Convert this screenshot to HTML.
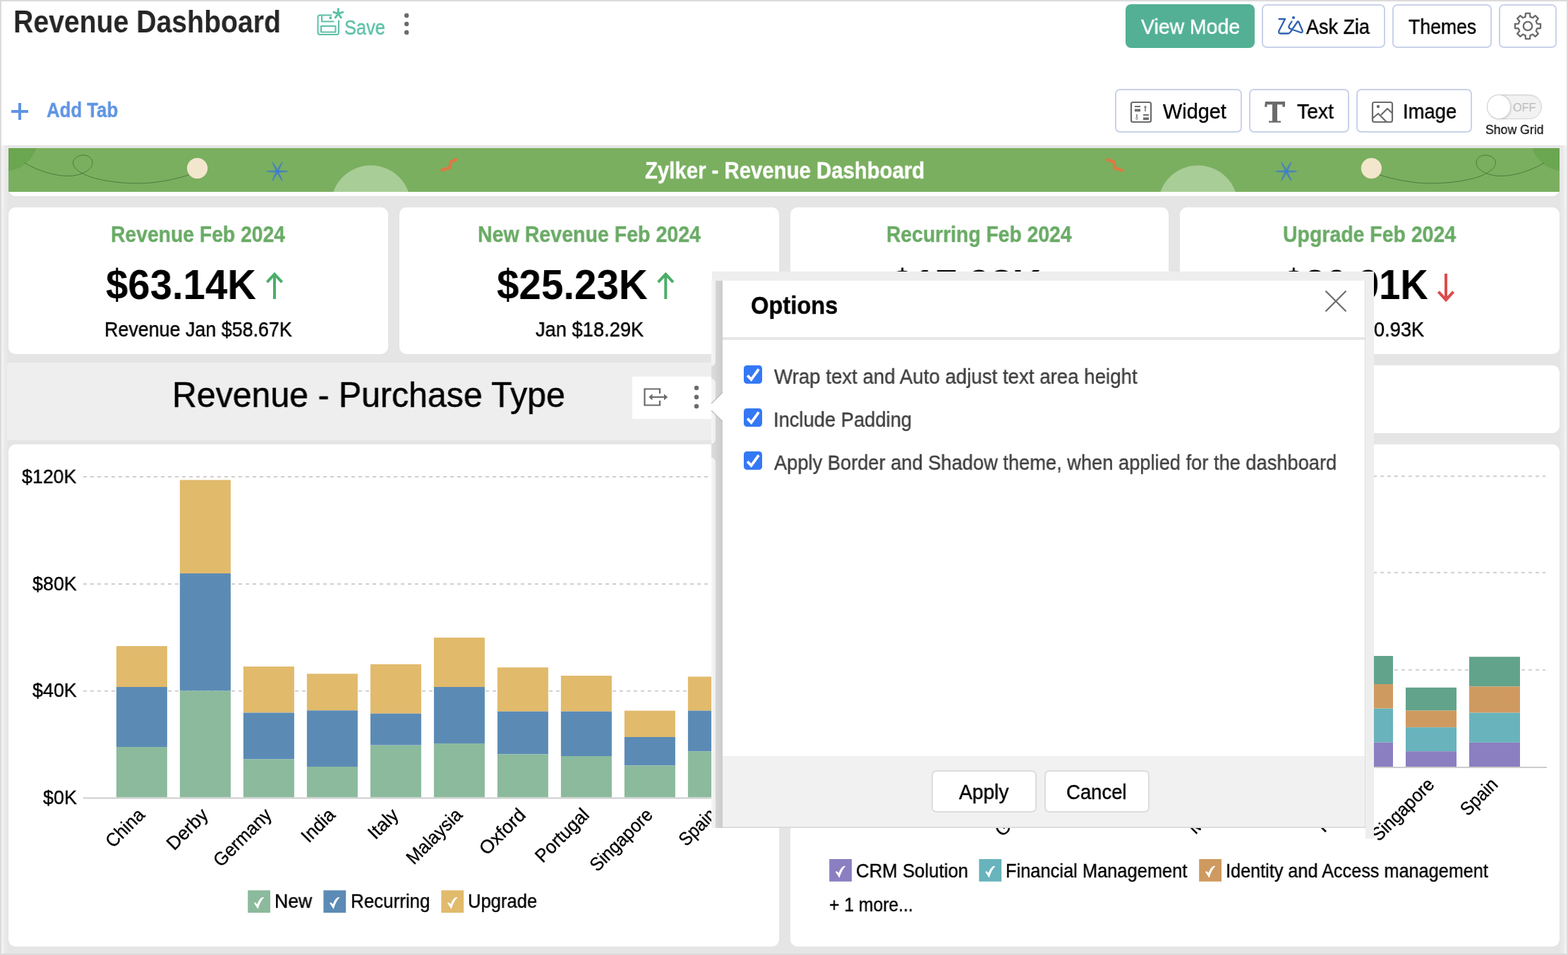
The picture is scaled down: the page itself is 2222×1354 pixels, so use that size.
<!DOCTYPE html>
<html lang="en">
<head>
<meta charset="utf-8">
<title>Revenue Dashboard</title>
<meta name="viewport" content="width=2222">
<style>
html,body{margin:0;padding:0;width:2222px;height:1354px;background:#e5e5e5}
body{font-family:"Liberation Sans",sans-serif}
.page{position:relative;width:2222px;height:1354px;overflow:hidden;background:#e5e5e5}
.a{position:absolute;box-sizing:border-box;display:block}
.t{position:absolute;white-space:nowrap;line-height:1;transform-origin:0 0;margin:0;padding:0;font-weight:400;will-change:transform}
.btn{background:#fff;border:2px solid #c9d2ea;border-radius:7px}
.card{background:#fff;border-radius:10px}
svg text{font-family:"Liberation Sans",sans-serif;stroke:#000;stroke-width:.35px}
svg.a{will-change:transform}
</style>
</head>
<body>
<main class="page">
<div class="a" style="left:2px;top:206px;width:10px;height:1146px;background:linear-gradient(90deg,#f4f4f4,#eaeaea 50%,#e5e5e5)"></div><div class="a" style="left:2210px;top:206px;width:10px;height:1146px;background:linear-gradient(270deg,#f4f4f4,#eaeaea 50%,#e5e5e5)"></div>
<header>
<div class="a" style="left:0px;top:0px;width:2222px;height:206px;background:#fff"></div>
<h1 class="t" style="left:18.55px;top:10.24px;font-size:43.52px;color:#262626;transform:scaleX(0.9005);font-weight:700">Revenue Dashboard</h1>
<svg class="a" style="left:446px;top:8px" width="44" height="46" viewBox="446 8 44 46" ><g fill="none" stroke="#5cc0a7" stroke-width="2" stroke-linejoin="round"><rect x="450.5" y="21.5" width="29.5" height="27.5" rx="3"/><path d="M456 22v8.5h17.5"/><rect x="455" y="37" width="20.5" height="8.5"/></g><rect x="466.5" y="23.5" width="3.6" height="3.6" fill="#5cc0a7"/><circle cx="479.3" cy="19.4" r="9.4" fill="#fff"/><g stroke="#5cc0a7" stroke-width="3" stroke-linecap="butt"><path d="M479.3 19.4L479.30 11.40M479.3 19.4L486.91 16.93M479.3 19.4L484.00 25.87M479.3 19.4L474.60 25.87M479.3 19.4L471.69 16.93"/></g></svg>
<span class="t" style="left:488.21px;top:25.2px;font-size:28.59px;color:#5cc0a7;transform:scaleX(0.8873);-webkit-text-stroke:0.41px">Save</span>
<svg class="a" style="left:570px;top:16px" width="12" height="36" viewBox="570 16 12 36" ><circle cx="576.2" cy="22" r="3.2" fill="#6b6b6b"/><circle cx="576.2" cy="34" r="3.2" fill="#6b6b6b"/><circle cx="576.2" cy="46" r="3.2" fill="#6b6b6b"/></svg>
<div class="a" style="left:1595px;top:6px;width:183px;height:62px;background:#53b095;border-radius:8px"></div>
<span class="t" style="left:1616.5px;top:23.56px;font-size:28.87px;color:#ffffff;transform:scaleX(0.985);-webkit-text-stroke:0.41px">View Mode</span>
<div class="a btn" style="left:1788px;top:6px;width:175px;height:62px;"></div>
<svg class="a" style="left:1808px;top:20px" width="42" height="32" viewBox="1808 20 42 32" ><g fill="none" stroke="#2f61b3" stroke-width="2.3" stroke-linecap="round" stroke-linejoin="round"><path d="M1812.5 27H1821L1812.5 43.5Q1811 47.5 1815 47.5H1825Q1827.5 47.5 1829 45L1838.5 31Q1839.5 29.5 1840.5 31.5L1845.5 43Q1846.5 46.5 1843 46L1829 41Q1825 39.5 1827 36L1830.5 30.5"/></g><circle cx="1833" cy="25" r="2.1" fill="#2f61b3"/></svg>
<span class="t" style="left:1851.0px;top:23.56px;font-size:28.87px;color:#000;transform:scaleX(0.9333);-webkit-text-stroke:0.41px">Ask Zia</span>
<div class="a btn" style="left:1973px;top:6px;width:140.5px;height:62px;"></div>
<span class="t" style="left:1995.58px;top:23.56px;font-size:28.87px;color:#000;transform:scaleX(0.9229);-webkit-text-stroke:0.41px">Themes</span>
<div class="a btn" style="left:2124px;top:6px;width:82px;height:62px;"></div>
<svg class="a" style="left:2142px;top:14px" width="46" height="46" viewBox="2142 14 46 46" ><path d="M2178.17,33.59 L2183.05,33.98 L2183.05,40.02 L2178.17,40.41 L2176.72,43.90 L2179.90,47.63 L2175.63,51.90 L2171.90,48.72 L2168.41,50.17 L2168.02,55.05 L2161.98,55.05 L2161.59,50.17 L2158.10,48.72 L2154.37,51.90 L2150.10,47.63 L2153.28,43.90 L2151.83,40.41 L2146.95,40.02 L2146.95,33.98 L2151.83,33.59 L2153.28,30.10 L2150.10,26.37 L2154.37,22.10 L2158.10,25.28 L2161.59,23.83 L2161.98,18.95 L2168.02,18.95 L2168.41,23.83 L2171.90,25.28 L2175.63,22.10 L2179.90,26.37 L2176.72,30.10Z" fill="none" stroke="#6b6b6b" stroke-width="2.3" stroke-linejoin="round"/><circle cx="2165" cy="37" r="6.2" fill="none" stroke="#6b6b6b" stroke-width="2.3"/></svg>
<svg class="a" style="left:14px;top:144px" width="28" height="28" viewBox="14 144 28 28" ><path d="M28 146v24M16 158h24" stroke="#5f94e3" stroke-width="4" fill="none"/></svg>
<span class="t" style="left:66.1px;top:141.56px;font-size:28.87px;color:#5f94e3;transform:scaleX(0.8934);font-weight:700;-webkit-text-stroke:0.4px">Add Tab</span>
<div class="a btn" style="left:1580px;top:126px;width:180px;height:62px;"></div>
<svg class="a" style="left:1600px;top:142px" width="34" height="34" viewBox="1600 142 34 34" ><rect x="1603" y="145" width="28" height="28" rx="2.5" fill="none" stroke="#6b6b6b" stroke-width="2.2"/><g fill="#6b6b6b"><rect x="1608" y="150" width="8" height="2"/><rect x="1608" y="154.5" width="8" height="3.7"/><rect x="1620" y="162" width="8" height="2"/><rect x="1620" y="166.5" width="8" height="3.7"/><path d="M1622.2 152.5l0.8-2.5l0.8 2.5h1.4l-2.2-3.2l-2.2 3.2zM1622.3 151h1.4v7h-1.4z"/><path d="M1610.3 162h1.4v7h-1.4zM1608.8 167.3l2.2 3.2l2.2-3.2z"/></g></svg>
<span class="t" style="left:1648.0px;top:143.56px;font-size:28.87px;color:#000;transform:scaleX(1.0005);-webkit-text-stroke:0.41px">Widget</span>
<div class="a btn" style="left:1770px;top:126px;width:142px;height:62px;"></div>
<svg class="a" style="left:1791px;top:142px" width="32" height="34" viewBox="1791 142 32 34" ><path d="M1793 144h28v7.5h-3.6v-3.2h-7.4v23.2h5v2.3h-17v-2.3h5v-23.2h-7.4v3.2h-3.6z" fill="#6b6b6b"/></svg>
<span class="t" style="left:1837.56px;top:143.56px;font-size:28.87px;color:#000;transform:scaleX(0.9792);-webkit-text-stroke:0.41px">Text</span>
<div class="a btn" style="left:1922px;top:126px;width:164px;height:62px;"></div>
<svg class="a" style="left:1942px;top:142px" width="34" height="34" viewBox="1942 142 34 34" ><g fill="none" stroke="#6b6b6b" stroke-width="2.2" stroke-linejoin="round"><rect x="1945" y="145" width="28" height="28" rx="2.5"/><path d="M1945.5 167.5l7.5-6.5l11.5 11.5M1957 163l9-9l7 6.5"/></g><circle cx="1953" cy="151" r="2.2" fill="#6b6b6b"/></svg>
<span class="t" style="left:1987.86px;top:143.56px;font-size:28.87px;color:#000;transform:scaleX(0.9504);-webkit-text-stroke:0.41px">Image</span>
<div class="a" style="left:2107px;top:134px;width:78px;height:34.5px;background:#f2f2f2;border:1.5px solid #d2d2d2;border-radius:18px;box-shadow:inset 0 1px 2px rgba(0,0,0,.06)"></div>
<div class="a" style="left:2107px;top:134px;width:34px;height:34.5px;background:#fff;border:1.5px solid #cfd0d6;border-radius:50%;box-shadow:1px 1px 3px rgba(0,0,0,.12)"></div>
<span class="t" style="left:2144.24px;top:143.75px;font-size:16.5px;color:#bdbdbd;transform:scaleX(0.9786);-webkit-text-stroke:0.24px">OFF</span>
<span class="t" style="left:2104.95px;top:175.25px;font-size:18.49px;color:#111;transform:scaleX(0.9563);-webkit-text-stroke:0.26px">Show Grid</span>
</header>
<section>
<div class="a" style="left:12px;top:210px;width:2198px;height:68px;background:#fff;border-radius:0 0 10px 10px"></div>
<svg class="a" style="left:12px;top:210px" width="2198" height="62" viewBox="12 210 2198 62" ><defs><clipPath id="bc"><rect x="12" y="210" width="2198" height="62"/></clipPath></defs><rect x="12" y="210" width="2198" height="62" fill="#7aaf5f"/><g clip-path="url(#bc)"><circle cx="6.3" cy="195" r="47.6" fill="#6ba650"/><circle cx="2216.7" cy="195" r="47.6" fill="#6ba650"/><circle cx="525.6" cy="291" r="56.5" fill="#a8cd96"/><circle cx="1697.6" cy="291" r="56.5" fill="#a8cd96"/><path d="M35,231 C55,243 80,250 98,249.5 C115,249 131,241 131,231 C131,224 125,220 118,220 C110,220 103.5,225 103.5,231 C103.5,240 120,250 140,254 C165,260 195,261 215,259 C235,257 255,252 268,248" fill="none" stroke="#47753a" stroke-width="0.9"/><path d="M35,231 C55,243 80,250 98,249.5 C115,249 131,241 131,231 C131,224 125,220 118,220 C110,220 103.5,225 103.5,231 C103.5,240 120,250 140,254 C165,260 195,261 215,259 C235,257 255,252 268,248" fill="none" stroke="#47753a" stroke-width="0.9" transform="translate(2223 0) scale(-1 1)"/><circle cx="279.6" cy="238.6" r="14.6" fill="#f2e6cc"/><circle cx="1943.4" cy="238.6" r="14.6" fill="#f2e6cc"/><ellipse cx="393" cy="243" rx="15.5" ry="1.6" fill="#4a86b6" transform="rotate(0 393 243)"/><ellipse cx="393" cy="243" rx="15.5" ry="1.6" fill="#4a86b6" transform="rotate(62 393 243)"/><ellipse cx="393" cy="243" rx="15.5" ry="1.6" fill="#4a86b6" transform="rotate(-62 393 243)"/><circle cx="393" cy="243" r="2.3" fill="#3a7ad6"/><ellipse cx="1822.8" cy="243" rx="15.5" ry="1.6" fill="#4a86b6" transform="rotate(0 1822.8 243)"/><ellipse cx="1822.8" cy="243" rx="15.5" ry="1.6" fill="#4a86b6" transform="rotate(62 1822.8 243)"/><ellipse cx="1822.8" cy="243" rx="15.5" ry="1.6" fill="#4a86b6" transform="rotate(-62 1822.8 243)"/><circle cx="1822.8" cy="243" r="2.3" fill="#3a7ad6"/><path d="M624.6 241.8L637.6 237.6L638.8 229.6L648 225.6" fill="none" stroke="#dc7a43" stroke-width="4.4"/><path d="M1568 225.6L1578.6 229.8L1579.8 238L1591.6 242.2" fill="none" stroke="#dc7a43" stroke-width="4.4"/></g></svg>
<h2 class="t" style="left:913.54px;top:226.28px;font-size:32.43px;color:#ffffff;transform:scaleX(0.905);font-weight:700;-webkit-text-stroke:0.4px">Zylker - Revenue Dashboard</h2>
</section>
<section>
<div class="a card" style="left:12px;top:294px;width:538px;height:208px;"></div>
<h3 class="t" style="left:157.23px;top:316.86px;font-size:31.29px;color:#6aab66;transform:scaleX(0.9049);font-weight:700;-webkit-text-stroke:0.4px">Revenue Feb 2024</h3>
<span class="t" style="left:150.3px;top:375.49px;font-size:59.02px;color:#000;transform:scaleX(0.9541);font-weight:700">$63.14K</span>
<svg class="a" style="left:12px;top:380px" width="538" height="52" viewBox="12 380 538 52" ><path d="M389 424V388.5M378.4 400.2L389 388.6L399.6 400.2" fill="none" stroke="#4bae69" stroke-width="4"/></svg>
<span class="t" style="left:147.9px;top:453.13px;font-size:28.73px;color:#000;transform:scaleX(0.9352);-webkit-text-stroke:0.41px">Revenue Jan $58.67K</span>
<div class="a card" style="left:566px;top:294px;width:538px;height:208px;"></div>
<h3 class="t" style="left:676.71px;top:316.86px;font-size:31.29px;color:#6aab66;transform:scaleX(0.9134);font-weight:700;-webkit-text-stroke:0.4px">New Revenue Feb 2024</h3>
<span class="t" style="left:704.0px;top:375.49px;font-size:59.02px;color:#000;transform:scaleX(0.9577);font-weight:700">$25.23K</span>
<svg class="a" style="left:566px;top:380px" width="538" height="52" viewBox="566 380 538 52" ><path d="M943.3 424V388.5M932.6999999999999 400.2L943.3 388.6L953.9 400.2" fill="none" stroke="#4bae69" stroke-width="4"/></svg>
<span class="t" style="left:758.57px;top:453.13px;font-size:28.73px;color:#000;transform:scaleX(0.9497);-webkit-text-stroke:0.41px">Jan $18.29K</span>
<div class="a card" style="left:1120px;top:294px;width:536px;height:208px;"></div>
<h3 class="t" style="left:1256.23px;top:316.86px;font-size:31.29px;color:#6aab66;transform:scaleX(0.9042);font-weight:700;-webkit-text-stroke:0.4px">Recurring Feb 2024</h3>
<span class="t" style="left:1263.0px;top:375.49px;font-size:59.02px;color:#000;transform:scaleX(0.9509);font-weight:700">$17.98K</span>
<svg class="a" style="left:1120px;top:380px" width="536" height="52" viewBox="1120 380 536 52" ><path d="M1502 388V425M1491.4 413.6L1502 425.2L1512.6 413.6" fill="none" stroke="#dc4c4c" stroke-width="4"/></svg>
<span class="t" style="left:1311.57px;top:453.13px;font-size:28.73px;color:#000;transform:scaleX(0.9497);-webkit-text-stroke:0.41px">Jan $17.05K</span>
<div class="a card" style="left:1672px;top:294px;width:538px;height:208px;"></div>
<h3 class="t" style="left:1818.17px;top:316.86px;font-size:31.29px;color:#6aab66;transform:scaleX(0.9095);font-weight:700;-webkit-text-stroke:0.4px">Upgrade Feb 2024</h3>
<span class="t" style="left:1817.5px;top:375.49px;font-size:59.02px;color:#000;transform:scaleX(0.9218);font-weight:700">$20.91K</span>
<svg class="a" style="left:1672px;top:380px" width="538" height="52" viewBox="1672 380 538 52" ><path d="M2049 388V425M2038.4 413.6L2049 425.2L2059.6 413.6" fill="none" stroke="#dc4c4c" stroke-width="4"/></svg>
<span class="t" style="left:1864.57px;top:453.13px;font-size:28.73px;color:#000;transform:scaleX(0.9497);-webkit-text-stroke:0.41px">Jan $20.93K</span>
</section>
<section>
<div class="a" style="left:10px;top:514px;width:1096px;height:110px;background:#eeeeee;border-radius:4px"></div>
<h2 class="t" style="left:244.23px;top:535.39px;font-size:49.21px;color:#000;transform:scaleX(0.9802);-webkit-text-stroke:0.5px">Revenue - Purchase Type</h2>
<div class="a" style="left:896px;top:534px;width:116px;height:60px;background:#fff"></div>
<svg class="a" style="left:908px;top:544px" width="86" height="38" viewBox="908 544 86 38" ><path d="M935 558V551.5H913.5V574.5H935V568" fill="none" stroke="#6b6b6b" stroke-width="2.2"/><path d="M923 563H943" stroke="#6b6b6b" stroke-width="2.2"/><path d="M919.3 563l5.2-4.6v9.2zM946.2 563l-5.2-4.6v9.2z" fill="#6b6b6b"/><circle cx="987" cy="550" r="3.2" fill="#6b6b6b"/><circle cx="987" cy="563" r="3.2" fill="#6b6b6b"/><circle cx="987" cy="576" r="3.2" fill="#6b6b6b"/></svg>
<div class="a card" style="left:1120px;top:518px;width:1090px;height:96px;"></div>
</section>
<section>
<div class="a card" style="left:12px;top:630px;width:1092px;height:712px;"></div>
<svg class="a" style="left:12px;top:630px" width="1092" height="712" viewBox="12 630 1092 712" ><path d="M118 676H1090" stroke="#d0d0d0" stroke-width="2" stroke-dasharray="5 5" fill="none"/><path d="M118 828H1090" stroke="#d0d0d0" stroke-width="2" stroke-dasharray="5 5" fill="none"/><path d="M118 979.7H1090" stroke="#d0d0d0" stroke-width="2" stroke-dasharray="5 5" fill="none"/><path d="M118 1131.6H1090" stroke="#cccccc" stroke-width="2" fill="none"/><rect x="164.9" y="916" width="72" height="58" fill="#e1ba6c"/><rect x="164.9" y="974" width="72" height="85" fill="#5b8bb5"/><rect x="164.9" y="1059" width="72" height="71.3" fill="#8bba9c"/><rect x="254.9" y="680.5" width="72" height="132.5" fill="#e1ba6c"/><rect x="254.9" y="813" width="72" height="166.5" fill="#5b8bb5"/><rect x="254.9" y="979.5" width="72" height="150.8" fill="#8bba9c"/><rect x="344.9" y="945" width="72" height="65.5" fill="#e1ba6c"/><rect x="344.9" y="1010.5" width="72" height="66" fill="#5b8bb5"/><rect x="344.9" y="1076.5" width="72" height="53.8" fill="#8bba9c"/><rect x="434.9" y="955.3" width="72" height="52" fill="#e1ba6c"/><rect x="434.9" y="1007.3" width="72" height="79.7" fill="#5b8bb5"/><rect x="434.9" y="1087" width="72" height="43.3" fill="#8bba9c"/><rect x="524.9" y="941.7" width="72" height="70" fill="#e1ba6c"/><rect x="524.9" y="1011.7" width="72" height="44.9" fill="#5b8bb5"/><rect x="524.9" y="1056.6" width="72" height="73.7" fill="#8bba9c"/><rect x="614.9" y="904" width="72" height="70" fill="#e1ba6c"/><rect x="614.9" y="974" width="72" height="80" fill="#5b8bb5"/><rect x="614.9" y="1054" width="72" height="76.3" fill="#8bba9c"/><rect x="704.9" y="946.3" width="72" height="62.4" fill="#e1ba6c"/><rect x="704.9" y="1008.7" width="72" height="60.6" fill="#5b8bb5"/><rect x="704.9" y="1069.3" width="72" height="61" fill="#8bba9c"/><rect x="794.9" y="958" width="72" height="50.7" fill="#e1ba6c"/><rect x="794.9" y="1008.7" width="72" height="63.3" fill="#5b8bb5"/><rect x="794.9" y="1072" width="72" height="58.3" fill="#8bba9c"/><rect x="884.9" y="1007.6" width="72" height="37.4" fill="#e1ba6c"/><rect x="884.9" y="1045" width="72" height="40.4" fill="#5b8bb5"/><rect x="884.9" y="1085.4" width="72" height="44.9" fill="#8bba9c"/><rect x="974.9" y="959.4" width="72" height="48.2" fill="#e1ba6c"/><rect x="974.9" y="1007.6" width="72" height="57.7" fill="#5b8bb5"/><rect x="974.9" y="1065.3" width="72" height="65" fill="#8bba9c"/><text transform="translate(206.5 1157.0) rotate(-45)" text-anchor="end" font-size="26.6" textLength="65.5" lengthAdjust="spacingAndGlyphs" fill="#000">China</text><text transform="translate(296.5 1157.0) rotate(-45)" text-anchor="end" font-size="26.6" textLength="70.4" lengthAdjust="spacingAndGlyphs" fill="#000">Derby</text><text transform="translate(386.5 1157.0) rotate(-45)" text-anchor="end" font-size="26.6" textLength="103.9" lengthAdjust="spacingAndGlyphs" fill="#000">Germany</text><text transform="translate(476.5 1157.0) rotate(-45)" text-anchor="end" font-size="26.6" textLength="55.3" lengthAdjust="spacingAndGlyphs" fill="#000">India</text><text transform="translate(566.5 1157.0) rotate(-45)" text-anchor="end" font-size="26.6" textLength="48.7" lengthAdjust="spacingAndGlyphs" fill="#000">Italy</text><text transform="translate(656.5 1157.0) rotate(-45)" text-anchor="end" font-size="26.6" textLength="99.0" lengthAdjust="spacingAndGlyphs" fill="#000">Malaysia</text><text transform="translate(746.5 1157.0) rotate(-45)" text-anchor="end" font-size="26.6" textLength="80.3" lengthAdjust="spacingAndGlyphs" fill="#000">Oxford</text><text transform="translate(836.5 1157.0) rotate(-45)" text-anchor="end" font-size="26.6" textLength="95.5" lengthAdjust="spacingAndGlyphs" fill="#000">Portugal</text><text transform="translate(926.5 1157.0) rotate(-45)" text-anchor="end" font-size="26.6" textLength="113.2" lengthAdjust="spacingAndGlyphs" fill="#000">Singapore</text><text transform="translate(1016.5 1157.0) rotate(-45)" text-anchor="end" font-size="26.6" textLength="62.1" lengthAdjust="spacingAndGlyphs" fill="#000">Spain</text><rect x="351.2" y="1262.3" width="31.8" height="31.8" fill="#8bba9c"/><path transform="translate(351.2 1262.3)" d="M8.8 18.3L10.4 16.9L13.4 19.6C15.1 14.7 17.3 11.2 20.8 9.7L23.3 10C19.8 13.2 16.6 18.7 14.6 26.3L14 26.3Z" fill="#fff"/><rect x="458.4" y="1262.3" width="31.8" height="31.8" fill="#5b8bb5"/><path transform="translate(458.4 1262.3)" d="M8.8 18.3L10.4 16.9L13.4 19.6C15.1 14.7 17.3 11.2 20.8 9.7L23.3 10C19.8 13.2 16.6 18.7 14.6 26.3L14 26.3Z" fill="#fff"/><rect x="625.3" y="1262.3" width="31.8" height="31.8" fill="#e1ba6c"/><path transform="translate(625.3 1262.3)" d="M8.8 18.3L10.4 16.9L13.4 19.6C15.1 14.7 17.3 11.2 20.8 9.7L23.3 10C19.8 13.2 16.6 18.7 14.6 26.3L14 26.3Z" fill="#fff"/></svg>
<span class="t" style="left:31.0px;top:662.56px;font-size:26.88px;color:#000;transform:scaleX(0.9944);-webkit-text-stroke:0.38px">$120K</span>
<span class="t" style="left:45.5px;top:814.56px;font-size:26.88px;color:#000;transform:scaleX(1.0002);-webkit-text-stroke:0.38px">$80K</span>
<span class="t" style="left:45.5px;top:966.06px;font-size:26.88px;color:#000;transform:scaleX(1.0002);-webkit-text-stroke:0.38px">$40K</span>
<span class="t" style="left:60.5px;top:1118.06px;font-size:26.88px;color:#000;transform:scaleX(0.9992);-webkit-text-stroke:0.38px">$0K</span>
<span class="t" style="left:388.92px;top:1265.16px;font-size:26.88px;color:#000;transform:scaleX(0.9904);-webkit-text-stroke:0.38px">New</span>
<span class="t" style="left:496.97px;top:1265.16px;font-size:26.88px;color:#000;transform:scaleX(0.9653);-webkit-text-stroke:0.38px">Recurring</span>
<span class="t" style="left:662.9px;top:1265.16px;font-size:26.88px;color:#000;transform:scaleX(0.9518);-webkit-text-stroke:0.38px">Upgrade</span>
<div class="a card" style="left:1120px;top:630px;width:1090px;height:712px;"></div>
<svg class="a" style="left:1120px;top:630px" width="1090" height="712" viewBox="1120 630 1090 712" ><path d="M1226 675.3H2190" stroke="#d0d0d0" stroke-width="2" stroke-dasharray="5 5" fill="none"/><path d="M1226 811.8H2190" stroke="#d0d0d0" stroke-width="2" stroke-dasharray="5 5" fill="none"/><path d="M1226 949.7H2190" stroke="#d0d0d0" stroke-width="2" stroke-dasharray="5 5" fill="none"/><path d="M1226 1088H2192" stroke="#cccccc" stroke-width="2" fill="none"/><rect x="1272" y="960" width="72" height="30" fill="#62a38b"/><rect x="1272" y="990" width="72" height="30" fill="#cf9a60"/><rect x="1272" y="1020" width="72" height="35" fill="#68b3bc"/><rect x="1272" y="1055" width="72" height="32" fill="#8b7fc1"/><rect x="1362" y="760" width="72" height="90" fill="#62a38b"/><rect x="1362" y="850" width="72" height="80" fill="#cf9a60"/><rect x="1362" y="930" width="72" height="80" fill="#68b3bc"/><rect x="1362" y="1010" width="72" height="77" fill="#8b7fc1"/><rect x="1452" y="975" width="72" height="28" fill="#62a38b"/><rect x="1452" y="1003" width="72" height="27" fill="#cf9a60"/><rect x="1452" y="1030" width="72" height="30" fill="#68b3bc"/><rect x="1452" y="1060" width="72" height="27" fill="#8b7fc1"/><rect x="1542" y="985" width="72" height="25" fill="#62a38b"/><rect x="1542" y="1010" width="72" height="30" fill="#cf9a60"/><rect x="1542" y="1040" width="72" height="26" fill="#68b3bc"/><rect x="1542" y="1066" width="72" height="21" fill="#8b7fc1"/><rect x="1632" y="970" width="72" height="30" fill="#62a38b"/><rect x="1632" y="1000" width="72" height="28" fill="#cf9a60"/><rect x="1632" y="1028" width="72" height="30" fill="#68b3bc"/><rect x="1632" y="1058" width="72" height="29" fill="#8b7fc1"/><rect x="1722" y="940" width="72" height="35" fill="#62a38b"/><rect x="1722" y="975" width="72" height="35" fill="#cf9a60"/><rect x="1722" y="1010" width="72" height="40" fill="#68b3bc"/><rect x="1722" y="1050" width="72" height="37" fill="#8b7fc1"/><rect x="1812" y="972" width="72" height="30" fill="#62a38b"/><rect x="1812" y="1002" width="72" height="28" fill="#cf9a60"/><rect x="1812" y="1030" width="72" height="30" fill="#68b3bc"/><rect x="1812" y="1060" width="72" height="27" fill="#8b7fc1"/><rect x="1902" y="930" width="72" height="40" fill="#62a38b"/><rect x="1902" y="970" width="72" height="34.6" fill="#cf9a60"/><rect x="1902" y="1004.6" width="72" height="47.9" fill="#68b3bc"/><rect x="1902" y="1052.5" width="72" height="34.5" fill="#8b7fc1"/><rect x="1992" y="974.8" width="72" height="32.7" fill="#62a38b"/><rect x="1992" y="1007.5" width="72" height="23.7" fill="#cf9a60"/><rect x="1992" y="1031.2" width="72" height="34" fill="#68b3bc"/><rect x="1992" y="1065.2" width="72" height="21.8" fill="#8b7fc1"/><rect x="2082" y="931.2" width="72" height="42.2" fill="#62a38b"/><rect x="2082" y="973.4" width="72" height="37.2" fill="#cf9a60"/><rect x="2082" y="1010.6" width="72" height="42.2" fill="#68b3bc"/><rect x="2082" y="1052.8" width="72" height="34.2" fill="#8b7fc1"/><text transform="translate(1314.0 1114.0) rotate(-45)" text-anchor="end" font-size="26.6" textLength="65.5" lengthAdjust="spacingAndGlyphs" fill="#000">China</text><text transform="translate(1404.0 1114.0) rotate(-45)" text-anchor="end" font-size="26.6" textLength="70.4" lengthAdjust="spacingAndGlyphs" fill="#000">Derby</text><text transform="translate(1494.0 1114.0) rotate(-45)" text-anchor="end" font-size="26.6" textLength="103.9" lengthAdjust="spacingAndGlyphs" fill="#000">Germany</text><text transform="translate(1584.0 1114.0) rotate(-45)" text-anchor="end" font-size="26.6" textLength="55.3" lengthAdjust="spacingAndGlyphs" fill="#000">India</text><text transform="translate(1674.0 1114.0) rotate(-45)" text-anchor="end" font-size="26.6" textLength="48.7" lengthAdjust="spacingAndGlyphs" fill="#000">Italy</text><text transform="translate(1764.0 1114.0) rotate(-45)" text-anchor="end" font-size="26.6" textLength="99.0" lengthAdjust="spacingAndGlyphs" fill="#000">Malaysia</text><text transform="translate(1854.0 1114.0) rotate(-45)" text-anchor="end" font-size="26.6" textLength="80.3" lengthAdjust="spacingAndGlyphs" fill="#000">Oxford</text><text transform="translate(1944.0 1114.0) rotate(-45)" text-anchor="end" font-size="26.6" textLength="95.5" lengthAdjust="spacingAndGlyphs" fill="#000">Portugal</text><text transform="translate(2034.0 1114.0) rotate(-45)" text-anchor="end" font-size="26.6" textLength="113.2" lengthAdjust="spacingAndGlyphs" fill="#000">Singapore</text><text transform="translate(2124.0 1114.0) rotate(-45)" text-anchor="end" font-size="26.6" textLength="62.1" lengthAdjust="spacingAndGlyphs" fill="#000">Spain</text><rect x="1175.2" y="1218" width="31.8" height="31.8" fill="#8b7fc1"/><path transform="translate(1175.2 1218)" d="M8.8 18.3L10.4 16.9L13.4 19.6C15.1 14.7 17.3 11.2 20.8 9.7L23.3 10C19.8 13.2 16.6 18.7 14.6 26.3L14 26.3Z" fill="#fff"/><rect x="1387.4" y="1218" width="31.8" height="31.8" fill="#68b3bc"/><path transform="translate(1387.4 1218)" d="M8.8 18.3L10.4 16.9L13.4 19.6C15.1 14.7 17.3 11.2 20.8 9.7L23.3 10C19.8 13.2 16.6 18.7 14.6 26.3L14 26.3Z" fill="#fff"/><rect x="1699.2" y="1218" width="31.8" height="31.8" fill="#cf9a60"/><path transform="translate(1699.2 1218)" d="M8.8 18.3L10.4 16.9L13.4 19.6C15.1 14.7 17.3 11.2 20.8 9.7L23.3 10C19.8 13.2 16.6 18.7 14.6 26.3L14 26.3Z" fill="#fff"/></svg>
<span class="t" style="left:1212.79px;top:1222.36px;font-size:26.88px;color:#000;transform:scaleX(0.9598);-webkit-text-stroke:0.38px">CRM Solution</span>
<span class="t" style="left:1425.01px;top:1222.36px;font-size:26.88px;color:#000;transform:scaleX(0.9465);-webkit-text-stroke:0.38px">Financial Management</span>
<span class="t" style="left:1736.63px;top:1222.36px;font-size:26.88px;color:#000;transform:scaleX(0.9392);-webkit-text-stroke:0.38px">Identity and Access management</span>
<span class="t" style="left:1174.84px;top:1269.56px;font-size:26.88px;color:#000;transform:scaleX(0.92);-webkit-text-stroke:0.38px">+ 1 more...</span>
</section>
<section>
<div class="a" style="left:1009px;top:385px;width:938px;height:13px;background:#eeeeee"></div>
<div class="a" style="left:1008px;top:398px;width:16px;height:776px;background:linear-gradient(90deg,#dedede,#d4d4d4 45%,#cccccc)"></div>
<div class="a" style="left:1008px;top:398px;width:6.2px;height:120.5px;background:linear-gradient(90deg,#f6f6f6,#eeeeee);border-radius:0 0 6px 0"></div>
<div class="a" style="left:1008px;top:537px;width:6.2px;height:92px;background:linear-gradient(90deg,#f6f6f6,#eeeeee);border-radius:0 6px 6px 0"></div>
<div class="a" style="left:1008px;top:649px;width:6.2px;height:525px;background:linear-gradient(90deg,#f6f6f6,#eeeeee);border-radius:0 6px 0 0"></div>
<div class="a" style="left:1934px;top:398px;width:1px;height:776px;background:#dddddd"></div>
<div class="a" style="left:1935px;top:398px;width:12px;height:791px;background:#eeeeee"></div>
<div class="a" style="left:1024px;top:398px;width:910px;height:674px;background:#fff"></div>
<div class="a" style="left:1024px;top:478px;width:910px;height:4px;background:#e6e6e6"></div>
<div class="a" style="left:1024px;top:1072px;width:910px;height:100px;background:#f1f1f1"></div>
<div class="a" style="left:1024px;top:1172px;width:910px;height:2px;background:#dddddd"></div>
<svg class="a" style="left:1008px;top:552px" width="18" height="50" viewBox="1008 552 18 50" ><path d="M1024.5 556L1008 572.3V582L1024.5 598Z" fill="#fff"/><path d="M1024 556.2L1008 572.3M1008 582L1024 597.8" fill="none" stroke="#bdbdbd" stroke-width="1.4"/></svg>
<h2 class="t" style="left:1063.98px;top:416.08px;font-size:35.84px;color:#000;transform:scaleX(0.9111);font-weight:700;-webkit-text-stroke:0.4px">Options</h2>
<svg class="a" style="left:1874px;top:408px" width="38" height="38" viewBox="1874 408 38 38" ><path d="M1878.5 412.5L1907.5 441.5M1907.5 412.5L1878.5 441.5" stroke="#6b6b6b" stroke-width="2.2" fill="none"/></svg>
<svg class="a" style="left:1052px;top:516px" width="30" height="30" viewBox="1052 516 30 30" ><rect x="1054" y="518" width="26" height="26" rx="4.5" fill="#3478f6"/><path d="M1059.2 532.4L1064.6 538L1075.2 523.4" fill="none" stroke="#fff" stroke-width="3.8"/></svg>
<label class="t" style="left:1096.5px;top:520.21px;font-size:28.59px;color:#3f3f3f;transform:scaleX(0.968);-webkit-text-stroke:0.41px">Wrap text and Auto adjust text area height</label>
<svg class="a" style="left:1052px;top:577px" width="30" height="30" viewBox="1052 577 30 30" ><rect x="1054" y="579" width="26" height="26" rx="4.5" fill="#3478f6"/><path d="M1059.2 593.4L1064.6 599L1075.2 584.4" fill="none" stroke="#fff" stroke-width="3.8"/></svg>
<label class="t" style="left:1095.86px;top:581.21px;font-size:28.59px;color:#3f3f3f;transform:scaleX(0.9567);-webkit-text-stroke:0.41px">Include Padding</label>
<svg class="a" style="left:1052px;top:638px" width="30" height="30" viewBox="1052 638 30 30" ><rect x="1054" y="640" width="26" height="26" rx="4.5" fill="#3478f6"/><path d="M1059.2 654.4L1064.6 660L1075.2 645.4" fill="none" stroke="#fff" stroke-width="3.8"/></svg>
<label class="t" style="left:1096.5px;top:642.21px;font-size:28.59px;color:#3f3f3f;transform:scaleX(0.954);-webkit-text-stroke:0.41px">Apply Border and Shadow theme, when applied for the dashboard</label>
<div class="a" style="left:1319.5px;top:1092px;width:149px;height:59.5px;background:#fff;border:2px solid #dddddd;border-radius:7px"></div>
<span class="t" style="left:1358.5px;top:1108.7px;font-size:28.59px;color:#000;transform:scaleX(0.9858);-webkit-text-stroke:0.41px">Apply</span>
<div class="a" style="left:1479.5px;top:1092px;width:149px;height:59.5px;background:#fff;border:2px solid #dddddd;border-radius:7px"></div>
<span class="t" style="left:1511.21px;top:1108.7px;font-size:28.59px;color:#000;transform:scaleX(0.9619);-webkit-text-stroke:0.41px">Cancel</span>
</section>
<div class="a" style="left:0px;top:0px;width:2222px;height:1354px;border:2px solid #dbdbdb;pointer-events:none"></div>
</main>
</body>
</html>
